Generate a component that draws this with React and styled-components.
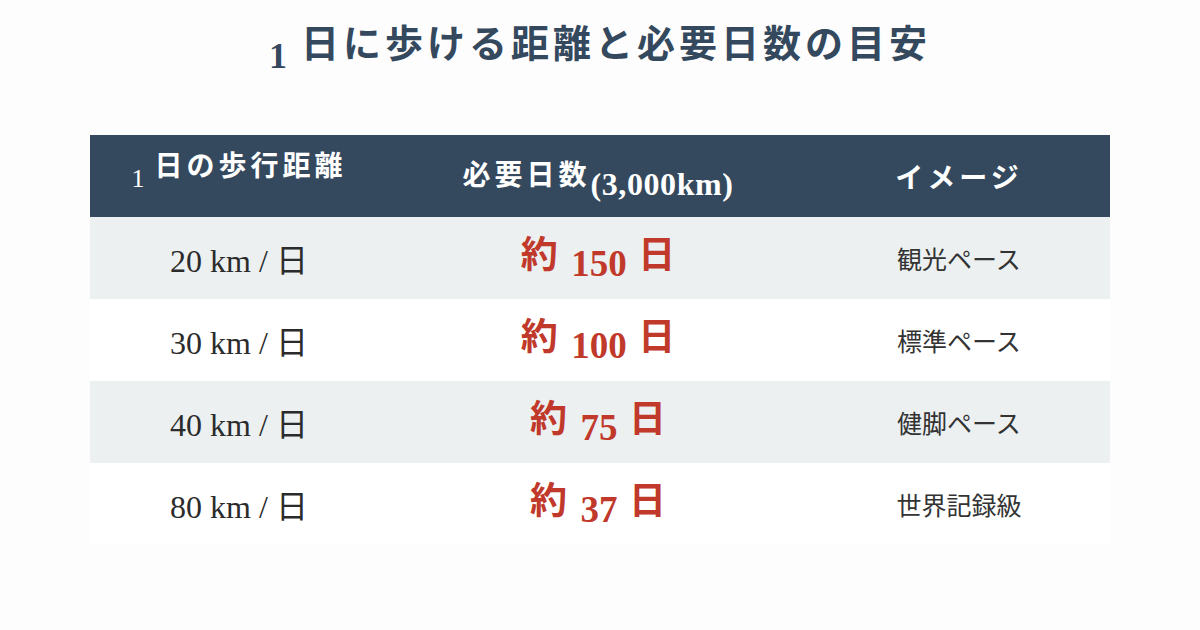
import React from "react";
import styled, { createGlobalStyle } from "styled-components";

const GlobalStyle = createGlobalStyle`
  html, body {
    margin: 0;
    padding: 0;
    background: #fdfdfd;
  }
  * {
    box-sizing: border-box;
  }
`;

const SERIF = `"Liberation Serif", "Noto Sans CJK JP", serif`;
const SANS = `"Noto Sans CJK JP", "Noto Sans", sans-serif`;

const Page = styled.div`
  width: 1200px;
  height: 630px;
  padding-top: 15px;
  display: flex;
  flex-direction: column;
  align-items: center;
  background: #fdfdfd;
`;

const Title = styled.h1`
  margin: 0;
  height: 52px;
  line-height: 52px;
  font-family: ${SANS};
  font-size: 38px;
  font-weight: 700;
  color: #34495e;
  white-space: nowrap;
`;

const Num = styled.span`
  font-family: ${SERIF};
  font-size: ${p => p.$size}px;
  font-weight: ${p => (p.$bold ? 700 : 400)};
  vertical-align: ${p => p.$drop || 0}px;
  margin: 0 ${p => p.$gap || 0}px 0 ${p => p.$lead || 0}px;
  letter-spacing: ${p => p.$spacing || 0}px;
`;

const Jp = styled.span`
  font-family: ${SANS};
  letter-spacing: ${p => p.$spacing || 0}px;
`;

const Table = styled.div`
  margin-top: 68px;
  width: 1020px;
  display: grid;
  grid-template-columns: 298px 420px 302px;
`;

const HeadCell = styled.div`
  height: 82px;
  background: #34495e;
  color: #ffffff;
  display: flex;
  align-items: center;
  justify-content: center;
  font-family: ${SANS};
  font-size: 28px;
  font-weight: 700;
  white-space: nowrap;
  padding-top: ${p => (p.$shift > 0 ? p.$shift : 0)}px;
  padding-bottom: ${p => (p.$shift < 0 ? -p.$shift : 0)}px;
`;

const HeadText = styled.span`
  display: inline-block;
  line-height: 40px;
`;

const Cell = styled.div`
  height: 82px;
  background: ${p => (p.$stripe ? "#ecf0f1" : "#ffffff")};
  display: flex;
  align-items: center;
  justify-content: center;
  white-space: nowrap;
`;

const Distance = styled.span`
  font-family: ${SERIF};
  font-size: 32px;
  color: #2b2b2b;
`;

const Days = styled.span`
  font-family: ${SANS};
  font-size: 37px;
  font-weight: 700;
  color: #c0392b;
  padding-bottom: 6px;
`;

const Pace = styled.span`
  font-family: ${SANS};
  font-size: 25px;
  color: #333333;
`;

const rows = [
  { km: 20, days: 150, pace: "観光ペース" },
  { km: 30, days: 100, pace: "標準ペース" },
  { km: 40, days: 75, pace: "健脚ペース" },
  { km: 80, days: 37, pace: "世界記録級" }
];

export default function App() {
  return (
    <>
      <GlobalStyle />
      <Page>
        <Title>
          <Num $size={36} $bold $drop={-11} $gap={14}>1</Num>
          <Jp $spacing={4}>日に歩ける距離と必要日数の目安</Jp>
        </Title>
        <Table>
          <HeadCell $shift={-10}>
            <HeadText>
              <Num $size={26} $drop={-11} $gap={10}>1</Num>
              <Jp $spacing={4}>日の歩行距離</Jp>
            </HeadText>
          </HeadCell>
          <HeadCell $shift={4}>
            <HeadText>
              <Jp $spacing={4}>必要日数</Jp>
              <Num $size={32} $bold $drop={-10} $spacing={0.6}>(3,000km)</Num>
            </HeadText>
          </HeadCell>
          <HeadCell>
            <HeadText>
              <Jp $spacing={4}>イメージ</Jp>
            </HeadText>
          </HeadCell>
          {rows.map((r, i) => (
            <React.Fragment key={r.km}>
              <Cell $stripe={i % 2 === 0}>
                <Distance>
                  {r.km} km / <Jp>日</Jp>
                </Distance>
              </Cell>
              <Cell $stripe={i % 2 === 0}>
                <Days>
                  約 <Num $size={37} $bold $drop={-8} $lead={5} $gap={3}>{r.days}</Num> 日
                </Days>
              </Cell>
              <Cell $stripe={i % 2 === 0}>
                <Pace>{r.pace}</Pace>
              </Cell>
            </React.Fragment>
          ))}
        </Table>
      </Page>
    </>
  );
}
